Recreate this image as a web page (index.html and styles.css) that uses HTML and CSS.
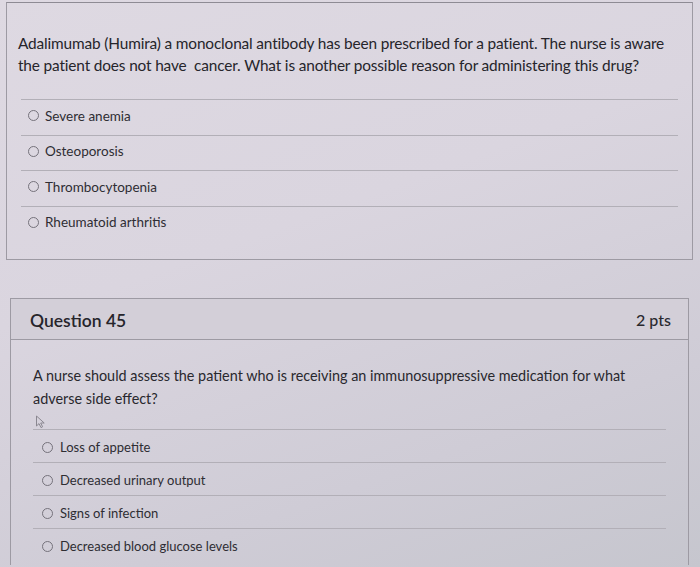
FILE: index.html
```html
<!DOCTYPE html>
<html>
<head>
<meta charset="utf-8">
<link rel="stylesheet" href="styles.css">
</head>
<body>
<div class="page">
  <section class="card card-one">
    <p class="qtext q1">Adalimumab (Humira) a monoclonal antibody has been prescribed for a patient. The nurse is aware the patient does not have&nbsp; cancer. What is another possible reason for administering this drug?</p>
    <ul class="answers a1">
      <li><span class="radio"></span>Severe anemia</li>
      <li><span class="radio"></span>Osteoporosis</li>
      <li><span class="radio"></span>Thrombocytopenia</li>
      <li><span class="radio"></span>Rheumatoid arthritis</li>
    </ul>
  </section>
  <section class="card card-two">
    <header class="qhead">
      <h2 class="qtitle">Question 45</h2>
      <span class="pts">2 pts</span>
    </header>
    <div class="qbody">
      <p class="qtext q2">A nurse should assess the patient who is receiving an immunosuppressive medication for what adverse side effect?</p>
      <div class="cursor-row">
        <svg class="cursor" width="12" height="14" viewBox="0 0 12 14"><path d="M1.5 1 L1.5 11 L4 8.6 L6 12.6 L7.6 11.8 L5.7 8 L9.2 8 Z" fill="none" stroke="#8a8790" stroke-width="1" stroke-linejoin="round"/></svg>
      </div>
      <ul class="answers a2">
        <li><span class="radio"></span>Loss of appetite</li>
        <li><span class="radio"></span>Decreased urinary output</li>
        <li><span class="radio"></span>Signs of infection</li>
        <li><span class="radio"></span>Decreased blood glucose levels</li>
      </ul>
    </div>
  </section>
</div>
</body>
</html>
```
FILE: styles.css
```css
html, body {
  margin: 0;
  padding: 0;
}
body {
  width: 700px;
  height: 567px;
  overflow: hidden;
  font-family: Lato, "Open Sans", sans-serif;
  color: #2b2a30;
  background: linear-gradient(160deg, #ded9e2 0%, #dad5df 40%, #cfccd6 75%, #c6c6ce 100%);
}
.page {
  padding-top: 2px;
}
.card {
  border: 1px solid #9d9aa3;
  box-sizing: border-box;
}
.card-one {
  margin-left: 6px;
  width: 687px;
  height: 258px;
  padding: 29px 14px 0 11px;
  border-top-color: #8e8b94;
}
.qtext {
  margin: 0;
}
.q1 {
  font-size: 15.4px;
  line-height: 22px;
  color: #26252b;
  letter-spacing: -0.15px;
}
.answers {
  list-style: none;
  margin: 0;
  padding: 0;
}
.answers li {
  display: flex;
  align-items: center;
  border-top: 1px solid #b2afb7;
  color: #2e2d33;
  box-sizing: border-box;
}
.a1 {
  margin-top: 23px;
  margin-left: 3px;
}
.a1 li {
  height: 35.5px;
  font-size: 13.5px;
  padding-left: 7px;
  padding-bottom: 3px;
}
.radio {
  width: 9px;
  height: 9px;
  border: 1.5px solid #75727b;
  border-radius: 50%;
  margin-right: 6px;
  flex: none;
}
.card-two {
  margin-top: 38px;
  margin-left: 10px;
  width: 679px;
  height: 267px;
  overflow: hidden;
  border-bottom: none;
}
.qhead {
  height: 40px;
  display: flex;
  justify-content: space-between;
  align-items: center;
  padding: 0 17px 0 19px;
  background: #d3cfd8;
  border-bottom: 1px solid #9d9aa3;
}
.qtitle {
  margin: 0;
  font-size: 17.5px;
  font-weight: 600;
  color: #26252b;
  padding-top: 3px;
}
.pts {
  font-size: 16px;
  font-weight: 500;
  color: #2a292f;
}
.qbody {
  padding: 24px 22px 0 22px;
}
.q2 {
  font-size: 14.4px;
  line-height: 23px;
  color: #29282e;
}
.cursor-row {
  height: 19px;
  padding: 5px 0 0 2px;
  box-sizing: border-box;
}
.cursor {
  display: block;
}
.a2 li {
  height: 33px;
  font-size: 13px;
  padding-left: 9px;
  padding-top: 2px;
}
.a2 .radio {
  margin-right: 7px;
}
```
